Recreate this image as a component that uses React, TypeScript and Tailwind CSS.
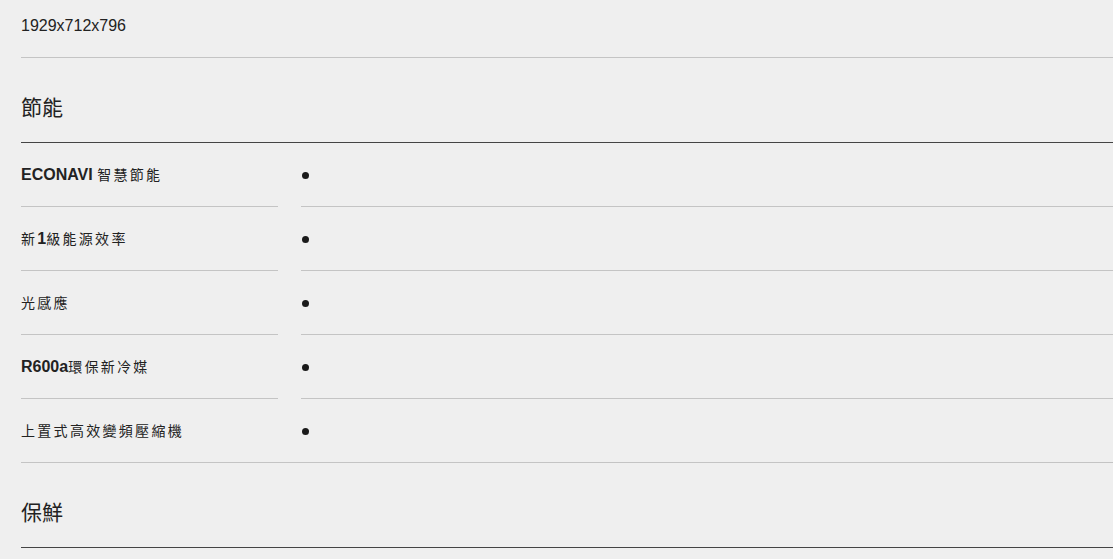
const font = { fontFamily: '"Liberation Sans", "Noto Sans CJK TC", sans-serif' };

const Cjk = ({ children }: { children: React.ReactNode }) => (
  <span className="text-sm tracking-[2.3px]">{children}</span>
);

const Lat = ({ children }: { children: React.ReactNode }) => (
  <b className="text-base">{children}</b>
);

const rows: React.ReactNode[] = [
  <>
    <Lat>ECONAVI </Lat>
    <Cjk>智慧節能</Cjk>
  </>,
  <>
    <Cjk>新</Cjk>
    <Lat>1</Lat>
    <Cjk>級能源效率</Cjk>
  </>,
  <Cjk>光感應</Cjk>,
  <>
    <Lat>R600a</Lat>
    <Cjk>環保新冷媒</Cjk>
  </>,
  <Cjk>上置式高效變頻壓縮機</Cjk>,
];

const SpecRow = ({ label, last }: { label: React.ReactNode; last: boolean }) => (
  <div className={`flex h-16 ${last ? "border-b border-[#c4c4c4]" : ""}`}>
    <div className={`w-[257px] flex items-center text-[#222] ${last ? "" : "border-b border-[#c4c4c4]"}`}>
      <span>{label}</span>
    </div>
    <div className="w-[23px]" />
    <div className={`flex-1 flex items-center pl-[1px] ${last ? "" : "border-b border-[#c4c4c4]"}`}>
      <div className="w-[7px] h-[7px] rounded-full bg-[#1a1a1a] mt-[2px]" />
    </div>
  </div>
);

export default function App() {
  return (
    <div className="min-h-screen bg-[#efefef] pl-[21px] overflow-hidden" style={font}>
      <div className="h-[58px] border-b border-[#c4c4c4] pt-[14px] text-base text-[#222]">
        1929x712x796
      </div>
      <div className="h-[85px] border-b border-[#444] flex items-center pt-[15px] text-[21px] text-[#222]">
        節能
      </div>
      {rows.map((r, i) => (
        <SpecRow key={i} label={r} last={i === rows.length - 1} />
      ))}
      <div className="h-[85px] border-b border-[#444] flex items-center pt-[15px] text-[21px] text-[#222]">
        保鮮
      </div>
    </div>
  );
}
